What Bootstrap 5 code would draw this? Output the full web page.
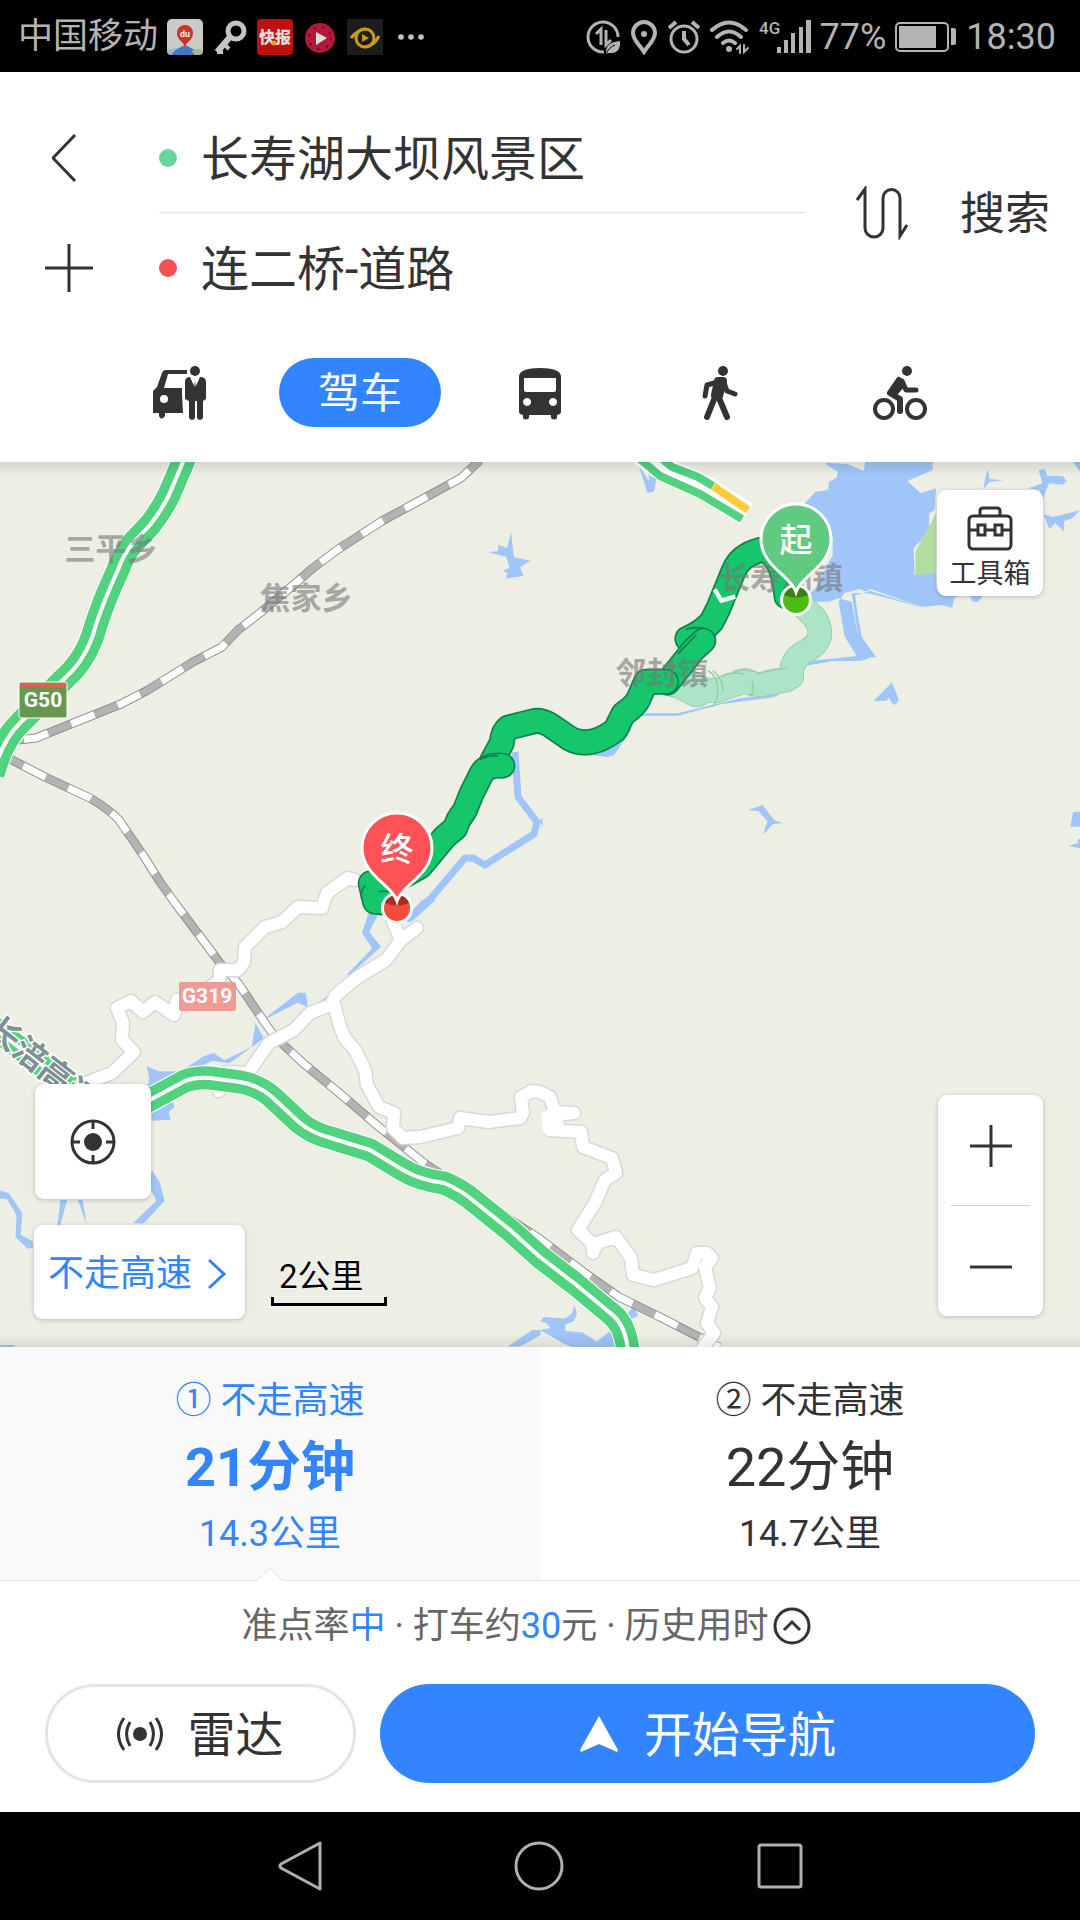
<!DOCTYPE html>
<html lang="zh-CN">
<head>
<meta charset="utf-8">
<meta name="viewport" content="width=device-width, initial-scale=1">
<title>路线规划</title>
<link href="https://cdn.jsdelivr.net/npm/bootstrap@5.3.0/dist/css/bootstrap.min.css" rel="stylesheet">
<style>
  :root { --ink:#333; --blue:#3385ff; }
  body { font-family: Roboto, "Noto Sans CJK SC", sans-serif; color: var(--ink); background:#fff; }
  svg { display:block; flex:none; }
  button { font-family:inherit; }
  .statusbar { height:72px; background:#000; color:#b4b4b4; font-size:36px; line-height:70px; padding:2px 24px 0 18px; }
  .status-apps { gap:9px; }
  .status-sys { gap:9px; }
  .carrier { font-size:35px; }
  .search-head { padding:31px 30px 35px 36px; }
  .side-col { width:66px; }
  .side-col button, .row-line { height:110px; }
  .addr { margin-left:57px; }
  .row-line + .row-line { box-shadow:0 -1px #ddd; }
  .dot { width:18px; height:18px; border-radius:50%; flex:none; }
  .dot-start { background:#67d69a; }
  .dot-end { background:#f35252; }
  .addr input { font-size:48px; line-height:72px; color:var(--ink); padding:4px 0 0; border:0; outline:0; background:none; width:100%; min-width:0; }
  .swap { margin:0 51px; }
  .fs-search { font-size:45px; line-height:66px; color:var(--ink); }
  .modes { padding:0 60px 0 54px; margin-top:35px; }
  .mode { height:69px; }
  .mode-pill { width:162px; height:69px; border-radius:35px; font-size:42px; line-height:72px; background:var(--blue); color:#fff; }
  .map-area { height:885px; background:#edeee4; }
  .map-area > svg { width:100%; height:100%; }
  .map-area::before, .map-area::after { content:""; position:absolute; left:0; right:0; height:14px; z-index:1; }
  .map-area::before { top:0; background:linear-gradient(#0000001a,#0000); }
  .map-area::after { bottom:0; background:linear-gradient(#0000,#00000014); }
  .float-box { position:absolute; z-index:2; background:#fffffffa; border-radius:9px; box-shadow:0 1px 5px #00000038; border:0; padding:0; color:var(--ink); }
  .toolbox { right:37px; top:28px; width:106px; height:106px; font-size:27px; line-height:36px; padding-top:12px; }
  .toolbox svg { margin-bottom:4px; }
  .zoomer { right:37px; bottom:31px; width:105px; }
  .zoomer button { height:110px; }
  .zoomer .zoom-in { padding-bottom:8px !important; }
  .zoomer hr { margin:0 13px; border-color:#ccc; opacity:1; border-top-width:1px; }
  .locate { left:35px; bottom:148px; width:116px; height:115px; background:#fff; }
  .prefer { left:34px; bottom:28px; width:211px; height:94px; font-size:36px; line-height:54px; color:var(--blue); padding:4px 18px 0 14px; }
  .scale { position:absolute; left:271px; bottom:41px; width:116px; z-index:2; color:#000; font-size:33px; line-height:40px; text-shadow:0 0 2px #fff,0 0 2px #fff,0 0 2px #fff; }
  .scale-bar { height:9px; border:3px solid #000; border-top:0; box-shadow:0 0 2px #fff; }
  .map-label { font-size:31px; font-weight:700; fill:#777; fill-opacity:.6; }
  .route { border:0; background:#fff; color:var(--ink); padding:29px 0 22px; font-size:36px; }
  .route.active { background:#f9f9f9; color:var(--blue); }
  .route .r-name { line-height:50px; }
  .route .r-time { font-size:54px; line-height:84px; }
  .route.active .r-time { font-weight:700; }
  .route .r-dist { line-height:48px; }
  .notch { left:25%; bottom:-1px; margin-left:-13px; }
  .routes { border-bottom:1px solid #e2e2e2; }
  .info { height:90px; font-size:36px; color:#666; padding-right:28px; }
  .info .hl { color:var(--blue); }
  .actions { padding:13px 45px 29px; gap:24px; }
  .act { height:99px; border-radius:50px; font-size:48px; line-height:72px; border:0; }
  .act-radar { width:311px; background:#fff; border:3px solid #e4e4e4; color:var(--ink); gap:24px; }
  .act-go { background:var(--blue); color:#fff; gap:25px; }
  .sysnav { height:108px; background:#000; padding:0 180px; }
</style>
</head>
<body>
<div class="d-flex flex-column min-vh-100">

  <div class="statusbar d-flex align-items-center justify-content-between">
    <div class="d-flex align-items-center status-apps">
      <span class="carrier">中国移动</span>
      <svg width="36" height="36"><rect width="36" height="36" rx="5" fill="#c9cbc9"/><path d="M2 36l8-6 8-4 10 5 5 5z" fill="#3f78c8"/><path d="M0 31l10-2-6 7H3q-3-1-3-3z" fill="#9db8c8"/><path d="M24 32q6-3 12-1v2q0 3-4 3h-4z" fill="#a3bb84"/><path d="M18 28C16 22 10 21 10 14a8 8 0 0 1 16 0c0 7-6 8-8 14z" fill="#cf3126"/><text x="18" y="18" font-size="9" font-weight="700" text-anchor="middle" fill="#eee">du</text></svg>
      <svg width="36" height="36" fill="none" stroke="#c4c4c4"><circle cx="24" cy="12" r="8" stroke-width="5"/><path d="M18 18L5 33" stroke-width="6"/><path d="M12 25l5 5M5 33h6" stroke-width="4"/></svg>
      <svg width="36" height="36"><rect width="36" height="36" rx="4" fill="#bf1010"/><text x="18" y="24" font-size="16" font-weight="900" text-anchor="middle" fill="#ddd">快报</text><circle cx="17" cy="24" r="2.500" fill="#e6a12d"/></svg>
      <svg width="36" height="36"><circle cx="18" cy="19" r="15" fill="#b4173a"/><circle cx="18" cy="19" r="11" fill="none" stroke="#5b0b1c" stroke-width="2" stroke-dasharray="2 7"/><path d="M14 13l11 6-11 7z" fill="#ddd"/></svg>
      <svg width="36" height="36"><rect width="36" height="36" fill="#1c1c1c"/><g fill="none" stroke="#c89b1e" stroke-width="3"><circle cx="18" cy="19" r="9"/><path d="M4 19q7-9 15-9M32 17q-5 10-14 11"/></g><path d="M15 15l7 4-7 4z" fill="#c89b1e"/></svg>
      <svg width="36" height="36" fill="#c4c4c4"><circle cx="9" cy="18" r="2.800"/><circle cx="19" cy="18" r="2.800"/><circle cx="29" cy="18" r="2.800"/></svg>
    </div>
    <div class="d-flex align-items-center status-sys">
      <svg width="35" height="36" fill="none" stroke="#b4b4b4" stroke-width="3"><path d="M32 18A15 15 0 1 0 18 33"/><path d="M10 15l5-5v16M20 11v15l5-5"/><path d="M20 35q-1-12 14-13 1 13-11 12z" fill="#b4b4b4" stroke="none"/><path d="M20 35q3-7 9-9" stroke="#000" stroke-width="1"/></svg>
      <svg width="28" height="36" fill="none" stroke="#b4b4b4" stroke-width="4"><path d="M14 33C9 25 3 21 3 14a11 11 0 0 1 22 0c0 7-6 11-11 19z"/><circle cx="14" cy="15" r="3" fill="#b4b4b4" stroke="none"/></svg>
      <svg width="34" height="36" fill="none" stroke="#b4b4b4" stroke-width="3"><circle cx="17" cy="20" r="13"/><path d="M17 12v8l5 6M2 9l7-6M32 9l-7-6" stroke-width="4"/></svg>
      <svg width="40" height="36" fill="none" stroke="#b4b4b4" stroke-width="4" stroke-linecap="round"><path d="M2 11Q19-4 36 11M7 18q12-11 24 0M13 24q6-5 12 0" /><circle cx="19" cy="30" r="3" fill="#b4b4b4" stroke="none"/><path d="M27 30l3-3v7M34 26v7l4-4" stroke-width="2"/></svg>
      <svg width="52" height="36" fill="#b4b4b4"><text x="0" y="15" font-size="17" font-weight="500">4G</text><path d="M18 28h4v6h-4zM25 21h4v13h-4zM32 14h4v20h-4zM40 8h4v26h-4zM47 1h5v33h-5z"/></svg>
      <span>77%</span>
      <svg width="62" height="30"><rect x="1" y="1" width="52" height="28" rx="4" fill="none" stroke="#b4b4b4" stroke-width="2"/><path d="M4 4h37v22H4zM56 6h3q2 0 2 2v13q0 2-2 2h-3z" fill="#b4b4b4"/></svg>
      <span>18:30</span>
    </div>
  </div>

  <header class="search-head">
    <form class="d-flex align-items-center">
      <div class="side-col d-flex flex-column">
        <button type="button" class="btn p-0 border-0" aria-label="返回"><svg class="ms-3" width="26" height="50" fill="none" stroke="#333" stroke-width="3"><path d="M23 2L1 25l22 23"/></svg></button>
        <button type="button" class="btn p-0 border-0" aria-label="添加途经点"><svg class="m-auto mx-2" width="50" height="50" stroke="#333" stroke-width="3"><path d="M25 1v48M1 25h48"/></svg></button>
      </div>
      <div class="addr flex-fill">
        <div class="row-line d-flex align-items-center">
          <label class="dot dot-start" for="from" aria-label="起点"></label>
          <input class="ms-4" id="from" value="长寿湖大坝风景区">
        </div>
        <div class="row-line d-flex align-items-center">
          <label class="dot dot-end" for="to" aria-label="终点"></label>
          <input class="ms-4" id="to" value="连二桥-道路">
        </div>
      </div>
      <button type="button" class="swap btn p-0 border-0" aria-label="交换起终点"><svg width="54" height="54" fill="none" stroke="#333" stroke-width="3"><path d="M2 14l8-11v39a8 8 0 0 0 18 0V12a8 8 0 0 1 17 0v38l7-11"/></svg></button>
      <button type="submit" class="btn p-0 pt-1 border-0 fs-search text-nowrap flex-shrink-0">搜索</button>
    </form>
    <nav class="modes row row-cols-5 gx-0" aria-label="出行方式">
      <button class="mode btn col border-0 p-0" aria-label="打车"><svg class="m-auto" width="54" height="54" fill="#333"><path d="M0 47V25l4-4 5-14q1-3 4-3h21v4H15L11 22h18v6l1 19H12v3q-4 5-6 0v-3z"/><circle cx="11" cy="33" r="4" fill="#fff"/><circle cx="42" cy="5" r="5"/><path d="M37 11l5 11 5-11q6 0 6 5v17l-3 2v17q-3 4-6 0V35h-2v17q-3 4-6 0V35l-4-2V16q0-5 5-5z"/><path d="M42 14l1 9-1 2-1-2z"/></svg></button>
      <button class="mode btn col border-0 p-0"><span class="mode-pill d-block mx-auto">驾车</span></button>
      <button class="mode btn col border-0 p-0" aria-label="公交"><svg class="m-auto" width="44" height="54" fill="#333"><path fill-rule="evenodd" d="M1 10Q2 2 22 2t21 8v36q0 2-4 3v3q-3 3-6 0v-3H11v3q-3 3-6 0v-3q-4-1-4-3zM6 12v12q0 2 2 2h28q2 0 2-2V12zM9 32a4 4 0 1 0 .100 0zM35 32a4 4 0 1 0 .100 0z"/></svg></button>
      <button class="mode btn col border-0 p-0" aria-label="步行"><svg class="m-auto" width="36" height="54" fill="none" stroke="#333" stroke-linecap="round" stroke-linejoin="round"><circle cx="21" cy="5" r="5" fill="#333" stroke="none"/><path d="M16 16L5 19 3 30M22 17l3 8 8 3" stroke-width="5"/><path d="M16 15h5l-4 15-4-1z" stroke-width="8" fill="#333"/><path d="M13 31L5 51M17 32l8 19" stroke-width="6"/></svg></button>
      <button class="mode btn col border-0 p-0" aria-label="骑行"><svg class="m-auto" width="54" height="54" fill="none" stroke="#333" stroke-linecap="round" stroke-linejoin="round"><circle cx="34" cy="5" r="5" fill="#333" stroke="none"/><circle cx="11" cy="43" r="9" stroke-width="4"/><circle cx="43" cy="43" r="9" stroke-width="4"/><path d="M26 14l-9 13 10 6v12" stroke-width="6"/><path d="M29 15l4 9h10" stroke-width="5"/><path d="M26 14l-9 13 5 2 9-10z" fill="#333" stroke-width="3"/></svg></button>
    </nav>
  </header>

  <main class="map-area position-relative overflow-hidden">
    <svg viewBox="0 462 1080 885" preserveAspectRatio="xMidYMid slice" role="img" aria-label="路线地图">
      <defs>
        <path id="rails" d="M480 460L461 478 417 502 382 521 337 550 313 568 291 587 260 613 238 630 222 647 193 662 148 690 121 704 96 714 71 724 36 738 18 740M10 759L45 777 90 798 Q110 810 119 820L143 855 160 882 175 903 205 943 220 963 238 983 265 1023 275 1037 303 1063 344 1097 379 1127 424 1163 448 1179 540 1239 585 1273 619 1297 660 1317 691 1333 719 1347"/>
        <path id="lanes" d="M355 880L348 878 327 893 322 908 298 907 282 922 265 927 245 947 244 962 238 970 220 970 219 980 200 996 177 1000 174 1015 155 1002 143 1012 131 1001 117 1008 123 1023 122 1040 134 1052 112 1073 83 1084M393 922L401 940 417 928 401 940 386 960 358 977 336 995 331 1005 310 1013 294 1030 269 1043 248 1073 227 1072 219 1091M334 1003L339 1023 344 1037 355 1050 365 1070 367 1085 379 1107 394 1113 393 1128 403 1138 420 1137 458 1128 460 1118 489 1122 520 1118 523 1113 521 1097 532 1091 540 1092 550 1097 555 1112 574 1113 552 1115 550 1130 581 1132 583 1147 612 1158 616 1173 605 1180 595 1203 578 1230 592 1243 593 1253 597 1243 616 1237 631 1258 633 1275 654 1280 692 1268 697 1253 707 1253 712 1258 705 1267 710 1288 705 1298 712 1307 707 1323 714 1333 702 1349"/>
        <path id="express" d="M186 455L169 495Q161 511 150 525L133 543Q123 555 118 570 104 600 96 625 91 644 82 658 76 668 66 677L21 722Q2 740-7 775M110 1122L148 1101 185 1081Q196 1077 210 1078L240 1082Q258 1085 272 1097L300 1123Q312 1133 331 1138L370 1150 403 1170Q420 1180 444 1183 461 1190 475 1202L510 1230 540 1257 574 1283 609 1312Q626 1324 628 1352M-10 1025L70 1087"/>
        <path id="leg-alt" d="M1380 310L1425 355Q1465 420 1395 455 1350 480 1355 530L1340 540 1260 555 1210 545 1130 572 1075 568 1000 555"/>
        <path id="leg-a" d="M1340 290Q1325 150 1262 150 1200 165 1180 215L1135 325 1115 365Q1090 395 1042 416"/>
        <path id="leg-b" d="M1090 422L1060 450 982 548"/>
        <path id="leg-c" d="M978 545L918 545 895 598Q885 618 850 642L826 690Q750 748 690 716L630 675Q600 658 580 664L505 683Q488 695 485 730L455 785"/>
        <path id="leg-d" d="M487 797Q440 795 425 820L395 880 375 930 355 960 345 985 315 1010 240 1100 150 1150 92 1150 105 1205 150 1210"/>
      </defs>

      <!-- lakes and ponds, north east -->
      <g transform="translate(540 455) scale(.3444 .3333)" fill="#a0c5f8">
        <path d="M830 28l35 22-5 20-22 10v25l-38 5-35 40 35 50 50 50v50l-50 100-40 40 80 0 25-10 40 10 18 100 42 58-15 14-20 6-80 0-80 15-25 0v-12l125-12 50-6-35-58-18-105 15-25 45-13 155 56 85-8 30 8 5-28 20-10h25l10 20h15l15-20-30-20h-105l-5-60-60 20-2-80 45-50v-55l15-10 5-65-45 15-38-37 73-33V15H945l-5 33-45-20-65-5z"/>
        <path d="M905 432l55-30 155 56-155 30-40-20z" fill="#edeee4"/>
        <path d="M905 415h50l160 43-155-50-45 13 5 40 14 85 42 60-36 4-10-8 25-2-30-52z"/>
        <path d="M1090 290l60-115v180l-60 6z" fill="#b3dea3"/>
        <path d="M286 30l30 48 0-30 5 17 19 0-10 45-18 4zM1300 42l5 30 40 4-40 5-18 22 5-30zM1448 45l17-3 8 20 45 2 12 15-12 10-40-4-8 20-10 30-10-30-32-5 40-15zM1548 21h20v30zM1462 178l28 8 78-20-25 25-22 8v30l-25-25-17 18zM1022 682l20 52-10 16-10-5-8-15-10 8-35-1zM604 1065l42-15 34 45 26 10-30 2-28 32 12-40-25-30zM1548 1070h20v45l-28 0zM1535 1172l27-8v-12h6v28zM0 1095l8-5v30z"/>
        <path d="M280 775h120l180-45 120-15-20 12-150 20-130 35H280zM150 900l110-95 5 20-50 75-20 6z"/>
      </g>
      <!-- ponds and streams, west and south -->
      <g transform="translate(0 455) scale(.3444 .3333)" fill="#a0c5f8"><path d="M1484 232l8 75 48 10-30 20 10 26-52 8 6-15-14-10 20-6-10-35-53-14 28-2 2-20 25 10z"/></g>
      <g transform="translate(0 900) scale(.3444 .3333)" fill="#a0c5f8">
        <path d="M1225 0h40l-70 65-15-5zM1070 40h30l-28 55 34 45-90 85-10 0 75-80-30-45zM975 268l-20 40-30 0zM775 350l90-72h23l6 44-30-14-88 47zM742 370l24 45-100 75-50-8-180 90-12 5 10-40-8-38 35 15 65 0 65-45 30-10 30 22 80-40zM440 560v102l55-3-5-22 17-17-8-20zM442 812l22 35 14 55-60 68h-32l68-68-24-50zM175 900l20 0-20 75-8 0zM226 900h14l12 75zM0 872l25 7 40 60-5 65 35 20v20l-15 2-35-35 3-65-28-50H0zM1475 1340l70-50h25v15l-60 35zM0 1335h42v8H0z"/>
        <path d="M1568 1290l30-5-10-15-20-5 12-14 60 5 20-15 8-26 7 25-9 25-25 8 0 20 50 5 40 25-5 8 60-50 20 20v60h-100l-70-30z"/>
        <path d="M1822 1240l20-22 10 30-20 10-12-5z"/>
      </g>
      <path fill="none" stroke="#a0c5f8" stroke-width="7" d="M515 752l3 45 19 25-3 12-49 31-12-7h-8l-33 39-26 23"/>

      <!-- railways -->
      <g fill="none" stroke-linejoin="round">
        <use href="#rails" stroke="#8f8f8f" stroke-width="9"/>
        <use href="#rails" stroke="#b3b3b3" stroke-width="7"/>
        <use href="#rails" stroke="#fff" stroke-width="7" stroke-dasharray="25 25" stroke-dashoffset="35"/>
      </g>

      <!-- minor roads: grey casing, then white -->
      <g fill="none" stroke-linejoin="round" stroke-linecap="round">
        <use href="#lanes" stroke="#d8d8d8" stroke-width="15"/>
        <use href="#lanes" stroke="#fff" stroke-width="12"/>
      </g>
      <path d="M541 1114l9-6h13v25h-20z" fill="#fff"/>

      <!-- expressways -->
      <g fill="none" stroke-linejoin="round">
        <use href="#express" stroke="#fff" stroke-width="25"/>
        <use href="#express" stroke="#50d27e" stroke-width="23"/>
        <use href="#express" stroke="#fff" stroke-width="4"/>
        <path stroke="#fff" stroke-width="25" d="M640 453L665 470 705 488 746 514"/>
        <path stroke="#50d27e" stroke-width="8" d="M640 459L660 476 700 494 742 519M655 453L672 467 698 477 713 486"/>
        <path stroke="#ffcb3d" stroke-width="8" d="M713 486L748 510"/>
      </g>

      <!-- place names -->
      <g class="map-label" text-anchor="middle">
        <text x="111" y="560">三平乡</text>
        <text x="306" y="609">焦家乡</text>
      </g>

      <!-- routes: alternative, then the chosen one -->
      <g transform="translate(340 500) scale(.33333)" fill="none" stroke-linejoin="round" stroke-linecap="round">
        <use href="#leg-alt" stroke="#8fce9f" stroke-width="74"/>
        <path stroke="#8fce9f" stroke-width="100" d="M1010 540L1070 572"/>
        <path stroke="#abe4c9" stroke-width="95" d="M1010 540L1070 572"/>
        <use href="#leg-alt" stroke="#abe4c9" stroke-width="69"/>
        <path stroke="#8fce9f" stroke-width="4" d="M1105 512q30 20 28 62t-20 46M1120 513q28 22 30 62M1145 527q30-14 62-5M1236 545q10 30-8 44M1180 515q40-20 80 8M1262 518q30-12 75-12"/>
        <use href="#leg-a" stroke="#0f8050" stroke-width="78"/><use href="#leg-a" stroke="#15c76a" stroke-width="68"/>
        <use href="#leg-b" stroke="#0f8050" stroke-width="78"/><use href="#leg-b" stroke="#15c76a" stroke-width="68"/>
        <use href="#leg-c" stroke="#0f8050" stroke-width="78"/><use href="#leg-c" stroke="#15c76a" stroke-width="68"/>
        <use href="#leg-d" stroke="#0f8050" stroke-width="78"/><use href="#leg-d" stroke="#15c76a" stroke-width="68"/>
        <path stroke="#0f8050" stroke-width="5" d="M1068 405L1015 460M1040 388q20-8 50-4M472 768q-30-2-50 10M75 1158q-14 16-10 36M118 1174h35"/>
        <path stroke="#fff" stroke-width="13" stroke-linejoin="miter" stroke-linecap="butt" d="M1124 268L1144 302 1186 290"/>
      </g>
      <g class="map-label" text-anchor="middle">
        <text x="662" y="684">邻封镇</text>
        <text x="781" y="589">长寿湖镇</text>
      </g>

      <!-- start and end pins -->
      <circle cx="796" cy="600" r="16" fill="#fff"/><circle cx="796" cy="600" r="13" fill="#4cbe12"/><path d="M784 595a13 13 0 0 1 24 0q-12 5-24 0z" fill="#388018"/>
      <path d="M796 592C791 576 761 566 761 539a35 35 0 0 1 70 0c0 27-30 37-35 53z" fill="#60ca81" stroke="#fff" stroke-width="3"/>
      <circle cx="397" cy="908" r="16" fill="#fff"/><circle cx="397" cy="908" r="13" fill="#f44b3b"/><path d="M385 903a13 13 0 0 1 24 0q-12 5-24 0z" fill="#a92d25"/>
      <path d="M397 901C392 885 362 875 362 848a35 35 0 0 1 70 0c0 27-30 37-35 53z" fill="#ff5257" stroke="#fff" stroke-width="3"/>
      <g font-size="33" font-weight="500" fill="#fff" text-anchor="middle"><text x="796" y="552">起</text><text x="397" y="861">终</text></g>

      <!-- road numbers -->
      <rect x="19" y="682" width="48" height="36" rx="2" fill="#68984f" stroke="#fff"/><path d="M20 683h46v4H20z" fill="#e2604f"/>
      <rect x="179" y="982" width="57" height="29" rx="2" fill="#ef9a94"/>
      <g font-size="21" font-weight="700" fill="#fff" text-anchor="middle"><text x="43" y="707">G50</text><text x="207" y="1003">G319</text></g>
      <text transform="translate(-16 1033) rotate(38)" font-size="33" font-weight="700" fill="#7f9095" stroke="#fff" stroke-width="3" paint-order="stroke">长涪高速</text>
    </svg>

    <button class="float-box toolbox text-center">
      <svg class="mx-auto" width="46" height="46" fill="none" stroke="#333" stroke-width="3"><rect x="2" y="10" width="42" height="33" rx="4"/><path d="M13 10V5q0-3 3-3h14q3 0 3 3v5M2 24h9M19 24h8M35 24h9"/><rect x="11" y="19" width="7" height="10"/><rect x="28" y="19" width="7" height="10"/></svg>
      工具箱
    </button>
    <div class="float-box zoomer d-flex flex-column">
      <button class="zoom-in btn border-0 p-0" aria-label="放大"><svg class="m-auto" width="42" height="42" stroke="#333" stroke-width="3"><path d="M21 0v42M0 21h42"/></svg></button>
      <hr>
      <button class="btn border-0 p-0" aria-label="缩小"><svg class="m-auto" width="42" height="42" stroke="#333" stroke-width="3"><path d="M0 27h42"/></svg></button>
    </div>
    <button class="float-box locate" aria-label="定位"><svg class="m-auto" width="46" height="46" fill="none" stroke="#333" stroke-width="3"><circle cx="23" cy="23" r="21"/><circle cx="23" cy="23" r="9" fill="#333" stroke="none"/><path d="M23 2v8M23 36v8M2 23h8M36 23h8"/></svg></button>
    <button class="float-box prefer d-flex align-items-center justify-content-between">不走高速
      <svg width="20" height="32" fill="none" stroke="#3385ff" stroke-width="3"><path d="M2 2l15 14L2 30"/></svg>
    </button>
    <div class="scale"><div class="ps-1 ms-1">2公里</div><div class="scale-bar"></div></div>
  </main>

  <section class="routes row g-0">
    <div class="col-6 d-flex">
      <button class="route active flex-fill"><span class="r-name d-block">① 不走高速</span><span class="r-time d-block">21分钟</span><span class="r-dist d-block">14.3公里</span></button>
    </div>
    <div class="col-6 d-flex">
      <button class="route flex-fill"><span class="r-name d-block">② 不走高速</span><span class="r-time d-block">22分钟</span><span class="r-dist d-block">14.7公里</span></button>
    </div>
  </section>
  <div class="position-relative"><svg class="position-absolute notch" width="26" height="15"><path d="M0 14L13 1l13 13v1H0z" fill="#fff"/><path d="M0 14L13 1l13 13" fill="none" stroke="#e2e2e2"/></svg></div>

  <div class="info d-flex align-items-center justify-content-center">
    <span>准点率<span class="hl">中</span> · 打车约<span class="hl">30</span>元 · 历史用时</span>
    <a href="#" class="ms-1" aria-label="展开"><svg width="38" height="38" fill="none" stroke="#333" stroke-width="3"><circle cx="19" cy="19" r="17"/><path d="M11 23l8-8 8 8"/></svg></a>
  </div>

  <div class="actions d-flex">
    <button class="act act-radar d-flex align-items-center justify-content-center">
      <svg width="46" height="36" fill="none" stroke="#333" stroke-width="3"><circle cx="23" cy="18" r="7" fill="#333" stroke="none"/><path d="M13 6q-7 12 0 24M33 6q7 12 0 24M7 2q-11 16 0 32M39 2q11 16 0 32"/></svg>
      <span class="pt-1">雷达</span>
    </button>
    <button class="act act-go flex-fill d-flex align-items-center justify-content-center">
      <svg width="40" height="36" fill="#fff"><path d="M20 0l19 34-1 2-18-8-18 8-1-2z"/></svg>
      <span class="pt-1">开始导航</span>
    </button>
  </div>

  <nav class="sysnav d-flex align-items-center justify-content-around mt-auto" aria-label="系统导航">
    <button class="btn border-0 p-0" aria-label="后退"><svg width="46" height="52" fill="none" stroke="#b0b0b0" stroke-width="3" stroke-linejoin="round"><path d="M44 3v46L5 28q-2-2 0-4z"/></svg></button>
    <button class="btn border-0 p-0" aria-label="主屏幕"><svg width="52" height="52" fill="none" stroke="#b0b0b0" stroke-width="3"><circle cx="26" cy="26" r="23"/></svg></button>
    <button class="btn border-0 p-0" aria-label="最近任务"><svg width="48" height="48" fill="none" stroke="#b0b0b0" stroke-width="3"><rect x="3" y="3" width="42" height="42" rx="2"/></svg></button>
  </nav>
</div>
<script src="https://cdn.jsdelivr.net/npm/bootstrap@5.3.0/dist/js/bootstrap.bundle.min.js"></script>
</body>
</html>
